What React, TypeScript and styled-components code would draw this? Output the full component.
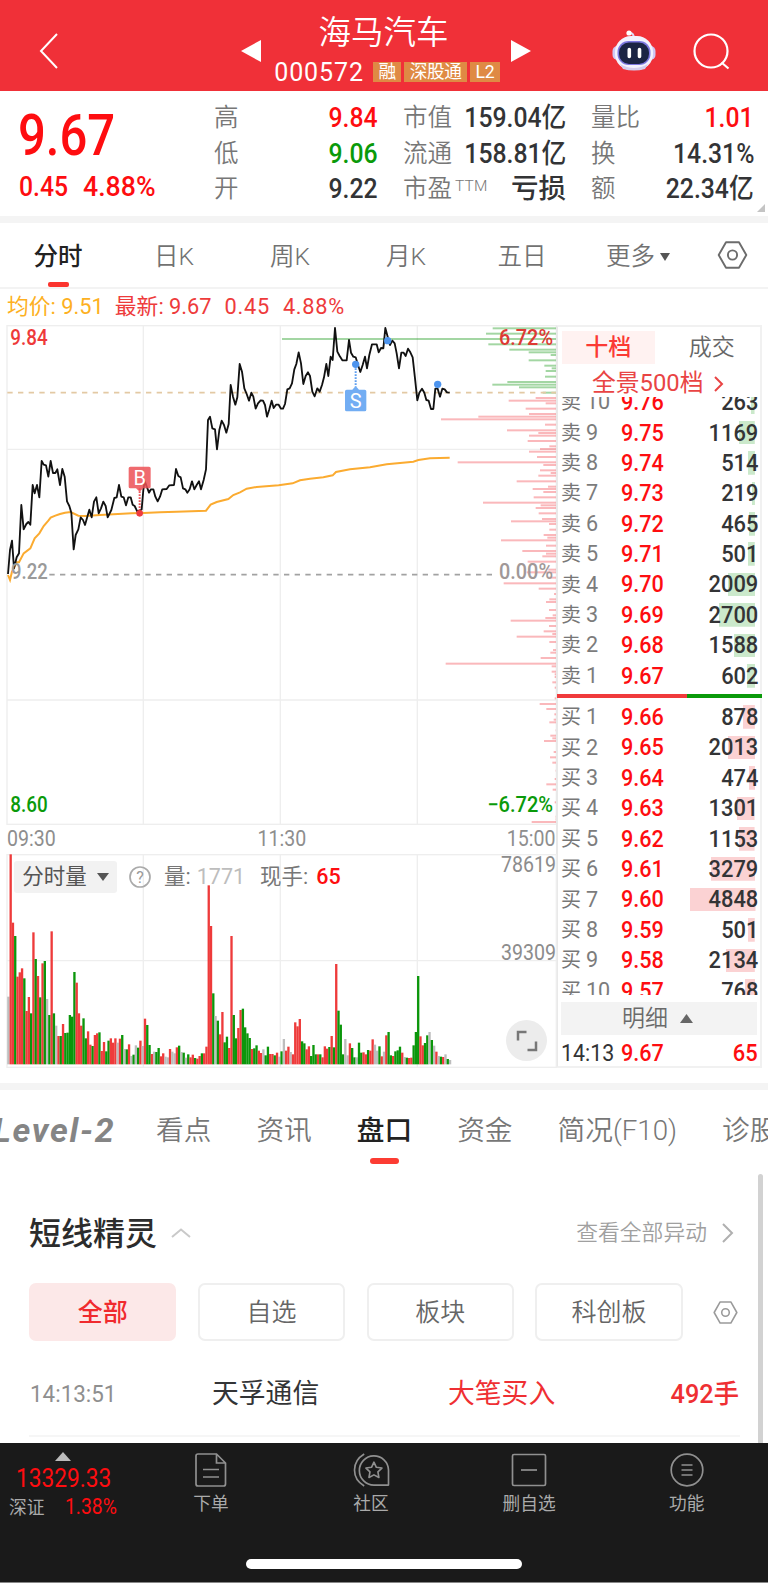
import React from "react";
import styled, { createGlobalStyle, css } from "styled-components";

const FONT = `Roboto, "Noto Sans CJK SC", sans-serif`;
const RED = "#fe0d10";
const SOFT_RED = "#ee3b3b";
const GREEN = "#0a9a0a";
const INK = "#333436";
const GREY = "#777";

const Global = createGlobalStyle`
  * { box-sizing: border-box; }
  body { margin: 0; background: #fff; font-family: ${FONT}; line-height: 1; color: ${INK}; }
`;

const Screen = styled.main`
  width: 768px;
  height: 1583px;
  display: flex;
  flex-direction: column;
  overflow: hidden;
  background: #fff;
`;

/* Digits are squeezed horizontally to give the narrow look of a quote typeface. */
const Num = styled.span<{ $size: number; $k?: number; $color?: string; $w?: number; $from?: string }>`
  display: inline-block;
  font-size: ${(p) => p.$size}px;
  font-weight: ${(p) => p.$w ?? 500};
  color: ${(p) => p.$color ?? "inherit"};
  transform: scaleX(${(p) => p.$k ?? 0.92});
  transform-origin: ${(p) => p.$from ?? "left"} center;
  white-space: nowrap;
`;

/* ---------- header ---------- */
const Header = styled.header`
  height: 91px;
  background: #f03038;
  color: #fff;
  display: grid;
  grid-template-columns: 240px 22px 249px 22px 79px 44px 37px 37px;
  align-items: center;
  flex: none;
`;
const BackBox = styled.div`padding: 13px 0 0 39px;`;
const ArrowBox = styled.div`padding-top: 10px; display: flex;`;
const TitleBox = styled.div`
  align-self: stretch;
  display: flex;
  flex-direction: column;
  align-items: center;
  padding-top: 18px;
`;
const Title = styled.h1`margin: 0 6px 0 0; font-size: 32.5px; font-weight: 350; line-height: 30px;`;
const CodeRow = styled.div`display: flex; align-items: center; gap: 3px; margin-top: 13px; height: 22px;`;
const Code = styled.span`font-size: 25px; letter-spacing: 0.9px; margin: 0 6px 0 1px;`;
const Tag = styled.span`
  background: #df8a44;
  height: 20px;
  padding: 0 5.5px;
  font-size: 17.7px;
  letter-spacing: -0.4px;
  line-height: 20px;
  display: block;
`;
const RobotBox = styled.div`grid-column: 6; padding-top: 8px; display: flex;`;
const SearchBox = styled.div`grid-column: 8; padding-top: 11px; display: flex;`;

/* ---------- quote ---------- */
const Quote = styled.section`
  height: 125px;
  flex: none;
  display: grid;
  grid-template-columns: 169px 164px 163px 163px;
  column-gap: 25px;
  padding: 9px 0 0 20px;
  position: relative;
`;
const PriceCol = styled.div`display: flex; flex-direction: column; padding-top: 7px;`;
const PriceNum = styled(Num)`margin-left: -2px;`;
const ChangeRow = styled.div`display: flex; margin-top: 9px; gap: 9px; margin-left: -1px;`;
const StatCol = styled.div`display: flex; flex-direction: column;`;
const Stat = styled.div`height: 35.5px; display: flex; align-items: center; justify-content: space-between;`;
const StatName = styled.span`font-size: 24.5px; color: ${GREY}; font-weight: 350; white-space: nowrap; padding-top: 1px;`;
const Sup = styled.sup`font-size: 15.5px; letter-spacing: 0.2px; vertical-align: 6px; margin-left: 3px; line-height: 0;`;
const Corner = styled.i`
  position: absolute;
  right: 3px;
  bottom: 4px;
  border-style: solid;
  border-width: 0 0 8px 8px;
  border-color: transparent transparent #c4c4c4 transparent;
`;
const Band = styled.div`height: 7px; background: #f4f4f4; flex: none;`;

/* ---------- period tabs ---------- */
const Periods = styled.nav`
  height: 66px;
  flex: none;
  display: flex;
  border-bottom: 2px solid #f3f3f3;
`;
const Period = styled.div<{ $on?: boolean }>`
  width: 116px;
  display: flex;
  justify-content: center;
  align-items: center;
  padding-top: 4px;
  gap: 5px;
  font-size: 24.5px;
  color: ${(p) => (p.$on ? "#222" : "#727272")};
  font-weight: ${(p) => (p.$on ? 500 : 350)};
  position: relative;
  ${(p) => p.$on && css`
    &::after {
      content: "";
      position: absolute;
      width: 21px;
      height: 5px;
      border-radius: 2px;
      background: #fb342e;
      bottom: 0;
      left: 48px;
    }
  `}
`;
const PeriodSettings = styled.div`flex: 1; display: flex; align-items: center; padding-left: 21px;`;
const Legend = styled.div`
  height: 36px;
  flex: none;
  padding: 0 0 0 7px;
  display: flex;
  align-items: center;
  font-size: 21.8px;
  color: ${SOFT_RED};
`;
const Average = styled.span`color: #fdb022; margin-right: 11px;`;
const LegendNum = styled.span`margin-left: 13px; letter-spacing: 0.7px;`;

/* ---------- charts ---------- */
const Market = styled.section`height: 743px; flex: none; display: grid; grid-template-columns: 557px 205px;`;
const Charts = styled.div`display: flex; flex-direction: column;`;
const TimeAxis = styled.div`
  height: 29px;
  padding: 0 1px 2px 7px;
  display: flex;
  justify-content: space-between;
  align-items: center;
  color: #8e8e8e;
`;
const VolumeArea = styled.div`position: relative; height: 214px;`;
const VolumeBar = styled.div`
  position: absolute;
  left: 14px;
  top: 7px;
  height: 32px;
  display: flex;
  align-items: center;
  font-size: 21.5px;
  color: #666;
`;
const Picker = styled.div`
  width: 103px;
  height: 32px;
  border-radius: 3px;
  background: #f2f2f2;
  display: flex;
  align-items: center;
  justify-content: center;
  gap: 10px;
  color: #555;
  margin-right: 12px;
`;
const VolText = styled.span<{ $color?: string; $ml: number; $bold?: boolean }>`
  margin-left: ${(p) => p.$ml}px;
  color: ${(p) => p.$color ?? "#777"};
  font-weight: ${(p) => (p.$bold ? 500 : 400)};
`;
const Expand = styled.button`
  position: absolute;
  left: 506px;
  top: 166px;
  width: 41px;
  height: 41px;
  border: 0;
  padding: 0;
  border-radius: 50%;
  background: #ececec;
  display: grid;
  place-items: center;
`;

/* ---------- order book ---------- */
const Book = styled.div`
  border: 2px solid #f1f1f1;
  border-left-color: #e9e9e9;
  margin-left: -1px;
  display: flex;
  flex-direction: column;
  width: 206px;
`;
const BookTabs = styled.div`display: flex; height: 37px; padding: 4px 2px 0 4px;`;
const BookTab = styled.div<{ $on?: boolean }>`
  flex: 1;
  height: 33px;
  display: flex;
  align-items: center;
  justify-content: center;
  font-size: 23px;
  background: ${(p) => (p.$on ? "#fff2f1" : "none")};
  color: ${(p) => (p.$on ? "#fb3a34" : "#666")};
  font-weight: ${(p) => (p.$on ? 500 : 350)};
  padding-left: ${(p) => (p.$on ? 0 : 11)}px;
`;
const AllLevels = styled.div`
  height: 33px;
  display: flex;
  align-items: center;
  padding: 6px 0 0 34px;
  gap: 10px;
  font-size: 23.8px;
  color: #e94444;
  font-weight: 400;
`;
const Levels = styled.div<{ $end?: boolean }>`
  height: 297px;
  overflow: hidden;
  display: flex;
  flex-direction: column;
  justify-content: ${(p) => (p.$end ? "flex-end" : "flex-start")};
  padding: ${(p) => (p.$end ? "0 0 3px" : "4px 0 0")};
  flex: none;
`;
const Level = styled.div`
  height: 30.4px;
  flex: none;
  display: grid;
  grid-template-columns: 25px 35px 1fr;
  align-items: center;
  padding: 0 2px 0 3px;
`;
const Side = styled.span`font-size: 20px; color: ${GREY};`;
const VolCell = styled.div<{ $tone: string; $bar: number }>`
  height: 23.5px;
  display: flex;
  align-items: center;
  justify-content: space-between;
  background: linear-gradient(${(p) => p.$tone}, ${(p) => p.$tone}) right 3px center / ${(p) => p.$bar}px 100% no-repeat;
`;
const Ratio = styled.div`
  height: 4px;
  flex: none;
  margin: 0 -2px 0 -1px;
  background: linear-gradient(90deg, #f03a3c 63.3%, #0a9a0a 63.3%);
`;
const DetailBar = styled.div`
  height: 33px;
  margin: 7px 3px 0;
  flex: none;
  background: #f3f3f3;
  display: flex;
  align-items: center;
  justify-content: center;
  gap: 12px;
  padding-right: 3px;
  font-size: 23px;
  color: #6a6a6a;
  font-weight: 350;
`;
const LastTrade = styled.div`flex: 1; display: grid; grid-template-columns: 60px 70px 1fr; align-items: center; padding: 5px 2px 0 3px;`;
const Right = styled.div`text-align: right;`;

/* ---------- lower section ---------- */
const Gap = styled.div`height: 15px; flex: none;`;
const InfoTabs = styled.nav`
  height: 76px;
  flex: none;
  display: flex;
  gap: 45px;
  padding-top: 27px;
  margin-left: -7px;
  overflow: hidden;
  white-space: nowrap;
  font-size: 27.7px;
  color: ${GREY};
  font-weight: 350;
`;
const LevelTwo = styled.span`
  width: 118px;
  flex: none;
  font-style: italic;
  font-weight: 700;
  font-size: 34px;
  line-height: 26px;
  letter-spacing: 1.7px;
  color: #858585;
`;
const InfoTab = styled.span<{ $on?: boolean }>`
  flex: none;
  position: relative;
  ${(p) => p.$on && css`
    color: #222;
    font-weight: 500;
    &::after {
      content: "";
      position: absolute;
      left: 13px;
      top: 41px;
      width: 29px;
      height: 6px;
      border-radius: 3px;
      background: #fc3c33;
    }
  `}
`;
const Feed = styled.section`
  flex: 1;
  display: grid;
  grid-template-columns: 1fr 5px;
  padding: 8px 5px 0 29px;
  column-gap: 18px;
`;
const FeedBody = styled.div`display: flex; flex-direction: column; width: 711px;`;
const Scrollbar = styled.div`background: #d2d2d2; border-radius: 3px 3px 0 0;`;
const FeedHead = styled.div`display: flex; align-items: center; height: 32px; margin-top: 43px;`;
const FeedTitle = styled.h2`margin: 2px 14px 0 0; font-size: 32px; font-weight: 500; color: #2c2c2c;`;
const MoreLink = styled.span`
  margin-left: auto;
  margin-right: 6px;
  font-size: 21.8px;
  color: #a0a0a0;
  font-weight: 350;
  display: flex;
  align-items: center;
  gap: 15px;
`;
const Chips = styled.div`display: flex; gap: 21.4px; margin-top: 34px; align-items: center;`;
const Chip = styled.button<{ $on?: boolean }>`
  width: 147.4px;
  height: 58px;
  padding: 0;
  border-radius: 7px;
  border: 2px solid ${(p) => (p.$on ? "#fce8e8" : "#efefef")};
  background: ${(p) => (p.$on ? "#fce8e8" : "#fff")};
  color: ${(p) => (p.$on ? "#f02a2e" : "#666")};
  font: ${(p) => (p.$on ? 500 : 350)} 25px/1 ${FONT};
`;
const ChipSettings = styled.div`margin-left: 9px; display: flex;`;
const Alert = styled.div`
  flex: 1;
  display: grid;
  grid-template-columns: 182px 236px 1fr auto;
  align-items: center;
  font-size: 26.8px;
  border-bottom: 2px solid #f6f6f6;
  margin-bottom: 6px;
  padding: 13px 1px 0 1px;
`;
const Red = styled.span`color: #ef2f33;`;

/* ---------- bottom bar ---------- */
const Dock = styled.footer`
  height: 140px;
  flex: none;
  background: #1a1a1a;
  border-bottom: 1px solid #888;
  display: flex;
  flex-direction: column;
  align-items: center;
`;
const DockRow = styled.div`height: 116px; width: 100%; display: flex;`;
const IndexBox = styled.div`
  width: 127px;
  padding-top: 9px;
  display: flex;
  flex-direction: column;
  align-items: center;
  color: ${RED};
  margin-right: 6px;
`;
const IndexValue = styled(Num)`margin-top: 5px;`;
const IndexRow = styled.div`
  display: flex;
  align-items: baseline;
  gap: 20px;
  margin-top: 4px;
  align-self: stretch;
  padding-left: 9px;
  color: #aaa;
  font-size: 17.8px;
  white-space: nowrap;
`;
const DockItem = styled.div<{ $w: number }>`
  width: ${(p) => p.$w}px;
  padding-top: 10px;
  display: flex;
  flex-direction: column;
  align-items: center;
  gap: 9px;
  font-size: 17.7px;
  color: #aaa;
`;
const HomeBar = styled.div`width: 276px; height: 10px; border-radius: 5px; background: #fff;`;

/* ---------- icons ---------- */
const Hex = ({ w, h, c }: { w: number; h: number; c: string }) => (
  <svg width={w} height={h} viewBox="0 0 30 28" fill="none" stroke={c} strokeWidth="1.9" strokeLinejoin="round">
    <path d="M8.5 1.2h13L28.8 14l-7.3 12.8h-13L1.2 14z" />
    <circle cx="15" cy="14" r="4.6" />
  </svg>
);
const Caret = ({ w, h, c, up }: { w: number; h: number; c: string; up?: boolean }) => (
  <svg width={w} height={h} viewBox="0 0 10 8" preserveAspectRatio="none">
    <path d={up ? "M5 0l5 8H0z" : "M0 0h10L5 8z"} fill={c} />
  </svg>
);
const Chevron = ({ w, h, c, d }: { w: number; h: number; c: string; d: string }) => (
  <svg width={w} height={h} viewBox={`0 0 ${w} ${h}`} fill="none" stroke={c} strokeWidth="2"><path d={d} /></svg>
);
const Robot = () => (
  <svg width="44" height="42" viewBox="0 0 44 42">
    <path d="M22 10c0-4-1-6-4-6.3" stroke="#dcd8f6" strokeWidth="2" fill="none" />
    <circle cx="17" cy="4" r="2.6" fill="#fff" />
    <rect x="0.5" y="17" width="43" height="14" rx="5" fill="#cfc8f5" />
    <rect x="3" y="7" width="38" height="34" rx="16" fill="#f3f1fd" />
    <path d="M8 35q14 8 28 0l-3 5q-11 3-22 0z" fill="#d3cdee" />
    <rect x="5.5" y="12" width="33" height="24" rx="11" fill="#7d78e0" />
    <rect x="7" y="13.5" width="30" height="21.5" rx="10" fill="#1b2444" />
    <path d="M17.3 20.5v7M27.5 20.5v7" stroke="#fff" strokeWidth="3.6" strokeLinecap="round" />
  </svg>
);

/* ---------- chart data: coordinates are in thirds of a pixel ---------- */
const PRICE =
  "24,762 30,690 36,662 42,745 50,712 57,700 64,555 71,628 79,612 85,606 91,614 98,495 104,520 111,495 118,532 125,423 131,434 138,436 145,470 152,423 159,459 166,459 172,448 180,495 187,447 194,470 201,544 208,558 214,578 221,688 227,645 235,628 242,592 249,600 255,615 268,569 275,592 282,545 289,532 296,580 303,565 310,545 317,558 323,592 334,570 343,534 350,532 357,495 364,530 371,532 378,556 385,532 392,532 398,554 404,558 412,575 425,568 430,510 434,483 447,518 453,508 460,508 466,530 473,544 480,530 487,508 500,507 508,496 522,495 528,447 535,468 542,472 549,505 556,508 562,518 569,508 576,484 583,508 590,495 597,484 603,508 611,480 618,448 624,300 630,290 637,325 645,328 651,388 658,330 665,302 672,315 679,338 686,312 692,195 699,230 706,254 712,232 719,132 726,155 733,205 740,222 747,242 754,218 760,230 767,266 774,250 782,241 789,242 795,255 801,290 808,268 815,242 821,264 828,254 836,254 843,266 849,266 855,252 862,208 869,205 876,190 883,148 889,132 896,97 903,130 910,192 917,168 924,157 930,168 937,215 944,229 952,205 959,215 966,195 972,172 979,132 985,168 992,110 998,120 1005,24 1012,95 1019,108 1027,121 1040,121 1047,60 1053,98 1060,110 1067,112 1074,135 1081,156 1088,135 1095,110 1101,145 1108,105 1116,73 1130,73 1136,97 1143,84 1150,85 1156,24 1163,50 1170,75 1177,62 1184,70 1190,100 1197,145 1204,98 1211,98 1217,108 1224,86 1231,97 1238,112 1245,175 1252,241 1258,218 1266,206 1273,218 1279,240 1286,242 1293,267 1300,267 1306,206 1313,206 1320,230 1327,206 1334,208 1341,217 1349,218";
const AVERAGE =
  "24,765 30,780 36,755 50,727 57,727 71,700 91,685 104,655 118,640 131,618 145,602 152,593 166,587 180,582 195,578 212,576 235,587 255,588 300,585 340,583 395,580 430,579 480,577 530,575 618,572 632,554 650,546 685,537 700,525 720,517 740,506 770,501 836,496 878,490 900,481 930,476 970,472 998,466 1008,456 1050,448 1110,442 1160,433 1240,425 1255,420 1290,415 1349,413";
/* "y:length" of each resting-volume bar, measured from the right edge */
const ASKS = "25:192 41:212 57:824 73:205 89:142 97:84 105:18 121:84 137:37 145:15 153:33 170:35 186:148 194:193 202:113 218:42";
const BIDS =
  "234:63 242:144 250:33 266:93 282:83 290:235 298:347 314:35 331:149 339:55 347:83 363:87 379:22 387:50 395:83 411:59 427:297 435:40 451:50 459:18 467:55 484:120 500:26 507:72 516:40 532:69 548:221 556:48 564:63 580:54 597:44 604:137 612:23 629:22 645:39 653:28 661:167 677:32 693:103 701:32 709:43 725:87 749:25 757:90 773:25 790:159 806:54 822:8 838:22 846:32 870:23 886:12 894:34 902:138 918:23 934:39 942:13 950:120 966:22 990:11 998:19 1014:48 1031:333 1039:15 1055:15 1063:6 1071:6 1087:13 1103:6 1135:6 1152:51 1167:31 1183:7 1199:9 1207:22 1231:3 1247:19 1255:13 1263:38 1296:9 1312:20 1328:13 1352:3 1377:6 1393:31 1409:12 1447:6 1490:3 1498:3 1506:75";
/* colour code and top of each minute's volume bar */
const VOLUME =
  "X530 R103 R308 G348 R470 R457 R445 G475 R573 R531 G580 R337 G417 R468 G532 R430 G423 X537 G585 R334 G580 X617 R648 G648 R612 G639 G638 G585 G590 G456 R488 R580 R617 G595 G655 R634 R674 G678 R645 R640 G637 R693 R666 G694 G662 R655 R668 R655 X668 R656 G645 X687 G688 R673 X708 G704 X676 G683 R662 X678 R596 G615 G675 R702 X695 G696 G684 R709 R700 X710 X712 R687 X695 X700 R682 G677 X696 G698 X713 G703 R712 R704 G714 R716 R708 G700 R700 R680 R196 R318 G520 X588 G602 R643 R576 G667 G650 R684 R348 G585 G655 R624 R570 G566 G622 G640 G654 R687 G685 G676 R692 R699 X688 G706 G680 R702 R702 G706 R698 X710 G694 X657 R692 R680 X696 R703 R607 R619 R597 G664 G670 R688 R679 G708 G675 G703 R703 G703 R712 R679 R686 G681 R648 G682 R432 G572 G614 G703 X657 X706 R670 G684 G712 X712 G668 G698 R697 R703 G690 R692 R658 X674 X692 G679 R709 X695 R646 G636 G706 R708 G694 G691 G680 R698 X711 G713 R714 R713 G676 G636 G468 R649 R676 G669 G646 X636 G660 X677 R695 X708 G710 R711 X703 G717 X720".split(" ");
const TONES: Record<string, string> = { R: "#ee3b3b", G: "#0b960b", X: "#bdbdbd" };

const pairs = (s: string) => s.split(" ").map((p) => p.split(":").map(Number));

const Label = ({ x, y, end, c, children, w, bold }: { x: number; y: number; end?: boolean; c: string; children: string; w: number; bold?: boolean }) => (
  <text x={x} y={y} textAnchor={end ? "end" : "start"} fill={c} fontSize="64" fontWeight={bold ? 500 : 400}
    textLength={w} lengthAdjust="spacingAndGlyphs">{children}</text>
);

const PriceChart = () => (
  <svg width="557" height="500" viewBox="0 15 1671 1500" fontFamily={FONT}>
    <g stroke="#eeeeee" strokeWidth="4" fill="none">
      <rect x="21" y="17" width="1648" height="1496" />
      <path d="M430 17V1513M841 17V1513M1252 17V1513M21 388H1669M21 1140H1669" />
    </g>
    {pairs(ASKS).map(([y, l]) => <rect key={y} x={1670 - l} y={y - 3} width={l} height="6" fill="#008c00" opacity=".36" />)}
    {pairs(BIDS).map(([y, l]) => <rect key={y} x={1670 - l} y={y - 3} width={l} height="6" fill="#f03038" opacity=".34" />)}
    <path d="M22 218H1669" stroke="#e3c9a4" strokeWidth="5" strokeDasharray="16 16" />
    <path d="M148 764H1480" stroke="#a2a2a2" strokeWidth="5" strokeDasharray="16 16" />
    <polyline points={AVERAGE} fill="none" stroke="#fbab30" strokeWidth="6" />
    <polyline points={PRICE} fill="none" stroke="#111" strokeWidth="5.5" strokeLinejoin="round" />
    <Label x={31} y={76} c="#ee3a3a" w={112} bold>9.84</Label>
    <Label x={1659} y={76} end c="#dd3a34" w={162} bold>6.72%</Label>
    <Label x={33} y={776} c="#9a9a9a" w={110} bold>9.22</Label>
    <Label x={1659} y={776} end c="#a09898" w={162} bold>0.00%</Label>
    <Label x={31} y={1476} c={GREEN} w={112} bold>8.60</Label>
    <Label x={1659} y={1476} end c={GREEN} w={197} bold>−6.72%</Label>
    <path d="M419 505V570" stroke="#ef5358" strokeWidth="6" strokeDasharray="5 4" />
    <circle cx="419" cy="580" r="10" fill="#ee3b40" />
    <path d="M391 440h56q5 0 5 5v55q0 5-5 5h-17l-11 10-11-10h-17q-5 0-5-5v-55q0-5 5-5z" fill="#ec5055" opacity=".85" />
    <text x="419" y="494" fontSize="60" fill="#fff" textAnchor="middle">B</text>
    <path d="M1067 145V200" stroke="#5f9ff0" strokeWidth="6" strokeDasharray="5 4" />
    <g fill="#4d94ee"><circle cx="1067" cy="133" r="11" /><circle cx="1163" cy="62" r="11" /><circle cx="1313" cy="193" r="11" /></g>
    <path d="M1040 209h17l10-11 10 11h17q5 0 5 5v55q0 5-5 5h-54q-5 0-5-5v-55q0-5 5-5z" fill="#72adf3" />
    <text x="1067" y="264" fontSize="60" fill="#fff" textAnchor="middle">S</text>
  </svg>
);

const VolumeChart = () => (
  <svg width="557" height="214" viewBox="0 102 1671 642" fontFamily={FONT}>
    <g stroke="#eeeeee" strokeWidth="4" fill="none">
      <rect x="21" y="104" width="1648" height="638" />
      <path d="M430 104V742M841 104V742M1252 104V742M21 422H1669" />
    </g>
    {VOLUME.map((v, i) => {
      const top = Number(v.slice(1));
      return <rect key={i} x={21.7 + (i * 1325) / (VOLUME.length - 1)} y={top} width="7" height={733 - top} fill={TONES[v[0]]} />;
    })}
    <Label x={1668} y={157} end c="#8c8c8c" w={165}>78619</Label>
    <Label x={1668} y={420} end c="#8c8c8c" w={165}>39309</Label>
  </svg>
);

const SELLS: [number, string, number][] = [
  [10, "9.76", 263], [9, "9.75", 1169], [8, "9.74", 514], [7, "9.73", 219], [6, "9.72", 465],
  [5, "9.71", 501], [4, "9.70", 2009], [3, "9.69", 2700], [2, "9.68", 1588], [1, "9.67", 602],
];
const BUYS: [number, string, number][] = [
  [1, "9.66", 878], [2, "9.65", 2013], [3, "9.64", 474], [4, "9.63", 1301], [5, "9.62", 1153],
  [6, "9.61", 3279], [7, "9.60", 4848], [8, "9.59", 501], [9, "9.58", 2134], [10, "9.57", 768],
];
const LevelRow = ({ side, row: [n, price, vol], tone }: { side: string; row: [number, string, number]; tone: string }) => (
  <Level>
    <Side>{side}</Side>
    <Num $size={22} $k={0.98} $w={400} $color="#7c7c7c">{n}</Num>
    <VolCell $tone={tone} $bar={(vol / 4848) * 65.5}>
      <Num $size={24.3} $k={0.89} $color={RED}>{price}</Num>
      <Num $size={24.3} $k={0.9} $from="right">{vol}</Num>
    </VolCell>
  </Level>
);

const STATS: [string, string, string?][][] = [
  [["高", "9.84", RED], ["低", "9.06", GREEN], ["开", "9.22"]],
  [["市值", "159.04亿"], ["流通", "158.81亿"], ["市盈", "亏损"]],
  [["量比", "1.01", RED], ["换", "14.31%"], ["额", "22.34亿"]],
];

export default function App() {
  return (
    <Screen>
      <Global />
      <Header>
        <BackBox><Chevron w={20} h={36} c="#fff" d="M18 1L2 18l16 17" /></BackBox>
        <ArrowBox><svg width="21" height="22"><path d="M21 0v22L1 11z" fill="#fff" /></svg></ArrowBox>
        <TitleBox>
          <Title>海马汽车</Title>
          <CodeRow><Code>000572</Code><Tag>融</Tag><Tag>深股通</Tag><Tag>L2</Tag></CodeRow>
        </TitleBox>
        <ArrowBox><svg width="21" height="22"><path d="M0 0v22L20 11z" fill="#fff" /></svg></ArrowBox>
        <RobotBox><Robot /></RobotBox>
        <SearchBox>
          <svg width="37" height="37" viewBox="0 0 37 37" fill="none" stroke="#fff" strokeWidth="2.2">
            <circle cx="18" cy="18" r="16.5" /><path d="M28.5 29.5l7 6" />
          </svg>
        </SearchBox>
      </Header>

      <Quote>
        <PriceCol>
          <PriceNum $size={57} $k={0.86} $color={RED}>9.67</PriceNum>
          <ChangeRow>
            <Num $size={27.5} $k={0.9} $color={RED}>0.45</Num>
            <Num $size={27.5} $k={0.97} $color={RED}>4.88%</Num>
          </ChangeRow>
        </PriceCol>
        {STATS.map((col, i) => (
          <StatCol key={i}>
            {col.map(([name, value, color]) => (
              <Stat key={name}>
                <StatName>{name}{name === "市盈" && <Sup>TTM</Sup>}</StatName>
                <Num $size={27.5} $k={name === "市盈" ? 1 : 0.9} $from="right" $color={color}>{value}</Num>
              </Stat>
            ))}
          </StatCol>
        ))}
        <Corner />
      </Quote>
      <Band />

      <Periods>
        <Period $on>分时</Period>
        <Period>日K</Period>
        <Period>周K</Period>
        <Period>月K</Period>
        <Period>五日</Period>
        <Period>更多<Caret w={10} h={8} c="#555" /></Period>
        <PeriodSettings><Hex w={31} h={28} c="#6c6c6c" /></PeriodSettings>
      </Periods>
      <Legend>
        <Average>均价: 9.51</Average>
        <span>最新: 9.67</span>
        <LegendNum>0.45</LegendNum>
        <LegendNum>4.88%</LegendNum>
      </Legend>

      <Market>
        <Charts>
          <PriceChart />
          <TimeAxis>
            <Num $size={21.5} $k={0.91} $w={400}>09:30</Num>
            <Num $size={21.5} $k={0.91} $w={400} $from="center">11:30</Num>
            <Num $size={21.5} $k={0.91} $w={400} $from="right">15:00</Num>
          </TimeAxis>
          <VolumeArea>
            <VolumeChart />
            <VolumeBar>
              <Picker>分时量<Caret w={12} h={8} c="#555" /></Picker>
              <svg width="22" height="22" viewBox="0 0 22 22">
                <circle cx="11" cy="11" r="10" fill="none" stroke="#aaa" strokeWidth="1.7" />
                <text x="11" y="16.5" fontSize="16" textAnchor="middle" fill="#999">?</text>
              </svg>
              <VolText $ml={13}>量:</VolText>
              <VolText $ml={6} $color="#bdbdbd">1771</VolText>
              <VolText $ml={15}>现手:</VolText>
              <VolText $ml={8} $color={RED} $bold>65</VolText>
            </VolumeBar>
            <Expand>
              <svg width="22" height="22" viewBox="0 0 22 22" fill="none" stroke="#777" strokeWidth="2.5">
                <path d="M10.5 2H2v8.5M20 11.5V20h-8.5" />
              </svg>
            </Expand>
          </VolumeArea>
        </Charts>

        <Book>
          <BookTabs><BookTab $on>十档</BookTab><BookTab>成交</BookTab></BookTabs>
          <AllLevels>全景500档<Chevron w={10} h={16} c="#e94444" d="M1 1l7 7L1 15" /></AllLevels>
          <Levels $end>{SELLS.map((r) => <LevelRow key={r[0]} side="卖" row={r} tone="#cbe9cb" />)}</Levels>
          <Ratio />
          <Levels>{BUYS.map((r) => <LevelRow key={r[0]} side="买" row={r} tone="#fbd2d3" />)}</Levels>
          <DetailBar>明细<Caret w={13} h={9} c="#666" up /></DetailBar>
          <LastTrade>
            <Num $size={24.3} $k={0.88} $w={400}>14:13</Num>
            <Num $size={24.3} $k={0.89} $color={RED}>9.67</Num>
            <Right><Num $size={24.3} $k={0.9} $from="right" $color={RED}>65</Num></Right>
          </LastTrade>
        </Book>
      </Market>

      <Gap />
      <Band />
      <InfoTabs>
        <LevelTwo>Level-2</LevelTwo>
        <InfoTab>看点</InfoTab>
        <InfoTab>资讯</InfoTab>
        <InfoTab $on>盘口</InfoTab>
        <InfoTab>资金</InfoTab>
        <InfoTab>简况(F10)</InfoTab>
        <InfoTab>诊股</InfoTab>
      </InfoTabs>
      <Feed>
        <FeedBody>
          <FeedHead>
            <FeedTitle>短线精灵</FeedTitle>
            <Chevron w={20} h={10} c="#c9c9c9" d="M1 9l9-7.5L19 9" />
            <MoreLink>查看全部异动<Chevron w={12} h={20} c="#b0b0b0" d="M1 1l9 9-9 9" /></MoreLink>
          </FeedHead>
          <Chips>
            <Chip $on>全部</Chip>
            <Chip>自选</Chip>
            <Chip>板块</Chip>
            <Chip>科创板</Chip>
            <ChipSettings><Hex w={25} h={23} c="#9a9a9a" /></ChipSettings>
          </Chips>
          <Alert>
            <Num $size={24.5} $k={0.915} $w={400} $color="#8f8f8f">14:13:51</Num>
            <span>天孚通信</span>
            <Red>大笔买入</Red>
            <Num $size={26.6} $k={0.95} $color="#ef2f33" $from="right">492手</Num>
          </Alert>
        </FeedBody>
        <Scrollbar />
      </Feed>

      <Dock>
        <DockRow>
          <IndexBox>
            <Caret w={16} h={9} c="#bbb" up />
            <IndexValue $size={25.5} $k={0.89} $w={400} $from="center">13329.33</IndexValue>
            <IndexRow>深证<Num $size={21.5} $k={0.9} $w={400} $color={RED}>1.38%</Num></IndexRow>
          </IndexBox>
          <DockItem $w={157}>
            <svg width="32" height="34" viewBox="0 0 32 34" fill="none" stroke="#909090" strokeWidth="1.7">
              <path d="M3 1h18.5L30.5 10v21q0 2-2 2H3q-2 0-2-2V3q0-2 2-2zM21.5 1v9h9M8 16.5h16M8 24h16" />
            </svg>
            下单
          </DockItem>
          <DockItem $w={164}>
            <svg width="37" height="34" viewBox="0 0 37 35" fill="none" stroke="#909090" strokeWidth="1.7" strokeLinejoin="round">
              <path d="M11 1Q1 7 1 17.5T11 34" />
              <path d="M36 33H21A15 15 0 1 1 36 17.500z" />
              <path d="M21 9.500l2.500 5.200 5.700.8-4.100 4 1 5.700-5.100-2.700-5.100 2.700 1-5.700-4.100-4 5.700-.8z" />
            </svg>
            社区
          </DockItem>
          <DockItem $w={153}>
            <svg width="36" height="34" viewBox="0 0 36 34" fill="none" stroke="#909090" strokeWidth="1.7">
              <rect x="1.5" y="1.5" width="33" height="31" rx="1.5" /><path d="M10 17h16" />
            </svg>
            删自选
          </DockItem>
          <DockItem $w={163}>
            <svg width="34" height="34" viewBox="0 0 34 34" fill="none" stroke="#909090" strokeWidth="1.7">
              <circle cx="17" cy="17" r="15.8" /><path d="M11.5 12h11M11.5 17h11M11.5 22h11" />
            </svg>
            功能
          </DockItem>
        </DockRow>
        <HomeBar />
      </Dock>
    </Screen>
  );
}
